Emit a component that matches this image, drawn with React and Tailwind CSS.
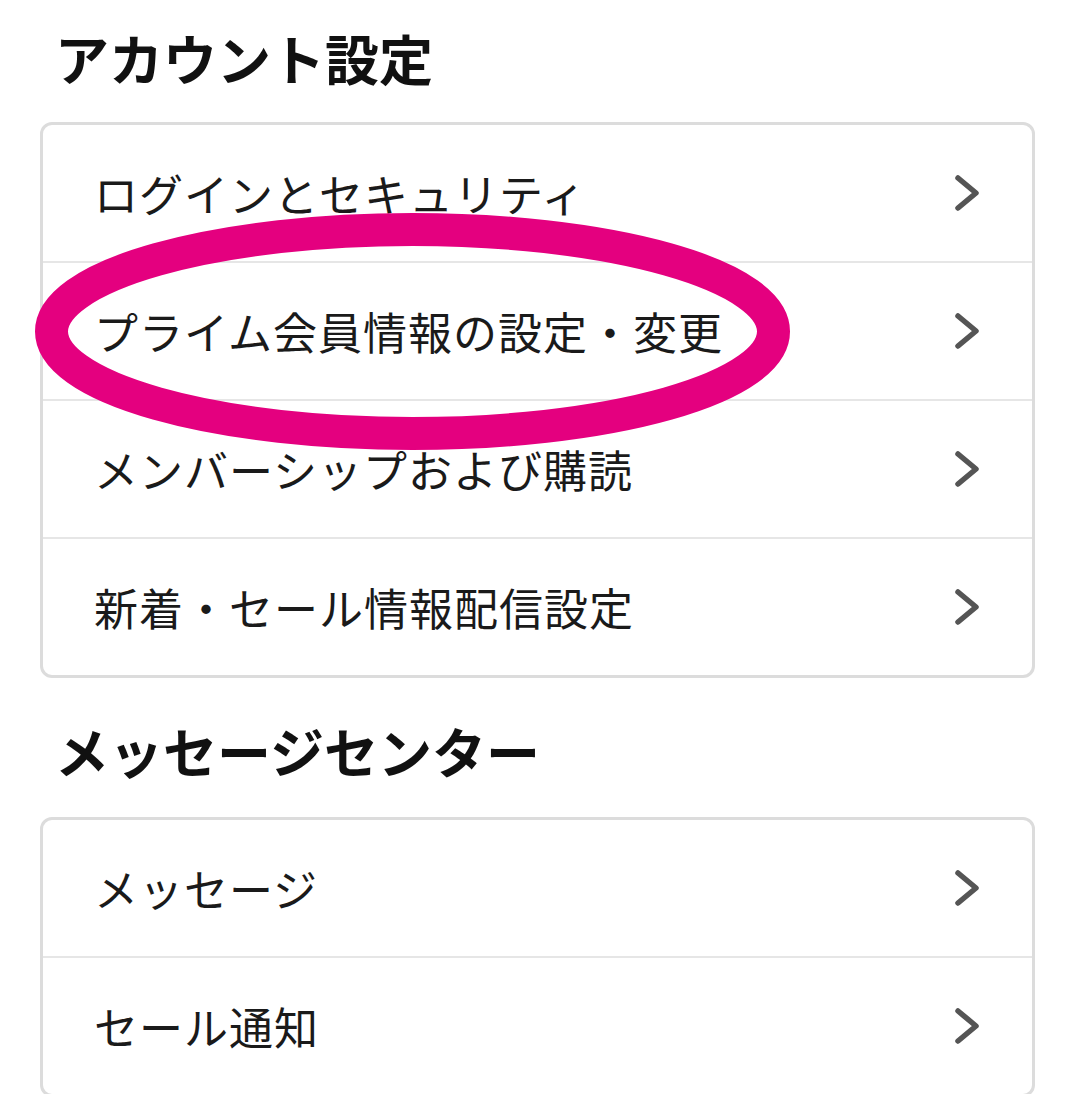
import React from "react";

const font = { fontFamily: '"Noto Sans CJK JP", "Noto Sans", sans-serif' };

function Chevron() {
  return (
    <svg width="26" height="38" viewBox="0 0 26 38" className="shrink-0">
      <polyline points="4,4 22,19 4,34" fill="none" stroke="#555555" strokeWidth="5.5" strokeLinecap="round" strokeLinejoin="round" />
    </svg>
  );
}

function Row({ label, last }) {
  return (
    <div className={`flex items-center justify-between pl-[51px] pr-[52px] ${last ? "h-[136px]" : "h-[138px] border-b-2 border-[#e6e6e6]"}`}>
      <span className="text-[44px] leading-[1.2] text-[#1a1a1a] tracking-[1px]">{label}</span>
      <Chevron />
    </div>
  );
}

function Section({ title, items, first }) {
  return (
    <section>
      <h2 className={`pl-[55px] text-[54px] font-bold leading-[65px] text-[#111111] ${first ? "pt-[25px] mb-[32px]" : "pt-[40px] mb-[34px]"}`}>{title}</h2>
      <div className="mx-[40px] w-[995px] rounded-[12px] border-[3px] border-[#dcdcdc] bg-white">
        {items.map((it, i) => (
          <Row key={it} label={it} last={i === items.length - 1} />
        ))}
      </div>
    </section>
  );
}

export default function App() {
  return (
    <div className="relative h-[1094px] w-[1073px] overflow-hidden bg-white" style={font}>
      <Section
        first
        title="アカウント設定"
        items={["ログインとセキュリティ", "プライム会員情報の設定・変更", "メンバーシップおよび購読", "新着・セール情報配信設定"]}
      />
      <Section title="メッセージセンター" items={["メッセージ", "セール通知"]} />
      <svg className="pointer-events-none absolute left-0 top-0" width="1073" height="1094" viewBox="0 0 1073 1094">
        <ellipse cx="412.5" cy="331.5" rx="361" ry="102" fill="none" stroke="#e4007f" strokeWidth="33" />
      </svg>
    </div>
  );
}
